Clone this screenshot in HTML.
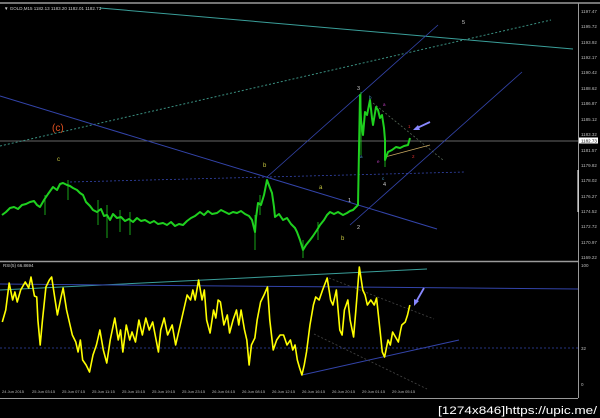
<!DOCTYPE html>
<html><head><meta charset="utf-8"><style>
html,body{margin:0;padding:0;background:#000;width:600px;height:418px;overflow:hidden}
svg{display:block}
text{font-family:"Liberation Sans",sans-serif}
</style></head><body>
<svg width="600" height="418" viewBox="0 0 600 418" xmlns="http://www.w3.org/2000/svg">
<rect width="600" height="418" fill="#000"/>
<line x1="0" y1="3" x2="600" y2="3" stroke="#9a9a9a" stroke-width="1.5"/>
<text x="4" y="10" font-size="4.5" fill="#ccc">▼ GOLD,M15  1182.13 1183.20 1182.01 1182.73</text>
<line x1="578.5" y1="3" x2="578.5" y2="398" stroke="#999" stroke-width="1"/>
<g font-size="4.5" fill="#bbb">
<text x="581" y="13">1197.47</text><text x="581" y="28">1195.72</text><text x="581" y="44">1193.92</text><text x="581" y="59">1192.17</text><text x="581" y="74">1190.42</text><text x="581" y="90">1188.62</text><text x="581" y="105">1186.87</text><text x="581" y="121">1185.12</text><text x="581" y="136">1183.32</text><text x="581" y="152">1181.57</text><text x="581" y="167">1179.82</text><text x="581" y="182">1178.02</text><text x="581" y="198">1176.27</text><text x="581" y="213">1174.52</text><text x="581" y="228">1172.72</text><text x="581" y="244">1170.97</text><text x="581" y="259">1169.22</text>
<text x="581" y="267">100</text><text x="581" y="350">32</text><text x="581" y="386">0</text>
</g>
<rect x="579" y="137.5" width="19" height="6" fill="#fff"/>
<text x="581" y="142.5" font-size="4.5" fill="#000">1182.73</text>
<line x1="578" y1="170" x2="578" y2="212" stroke="#fff" stroke-width="1"/>
<line x1="0" y1="141" x2="578" y2="141" stroke="#888" stroke-width="0.8"/>
<line x1="100" y1="8" x2="573" y2="49" stroke="#3a9f9a" stroke-width="1"/>
<line x1="0" y1="146" x2="551" y2="20" stroke="#3a8f80" stroke-width="1" stroke-dasharray="2,2"/>
<line x1="0" y1="96" x2="437" y2="229" stroke="#3344aa" stroke-width="1"/>
<line x1="267" y1="177" x2="438" y2="25" stroke="#3344aa" stroke-width="0.8"/>
<line x1="350" y1="225" x2="522" y2="72" stroke="#3344aa" stroke-width="0.8"/>
<line x1="70" y1="182" x2="465" y2="172" stroke="#3344aa" stroke-width="0.8" stroke-dasharray="2,2"/>
<line x1="373" y1="103" x2="443" y2="160" stroke="#556655" stroke-width="0.8" stroke-dasharray="2,2"/>
<line x1="385" y1="157" x2="430" y2="145" stroke="#c8a860" stroke-width="0.8"/>
<line x1="430" y1="122" x2="415" y2="129" stroke="#8888ff" stroke-width="1.8"/>
<polygon points="413,130 418,125 420,130" fill="#8888ff"/>
<polyline fill="none" stroke="#1fd01f" stroke-width="2" stroke-linejoin="round" points="2,215 6,212 10,208 14,207 18,209 22,205 26,204 30,202 34,201 37,205 40,207 44,200 48,194 53,187 57,190 60,184 63,183 67,185 70,186 73,188 77,190 80,193 83,195 86,202 90,206 93,210 97,212 101,209 104,216 107,215 110,220 113,214 117,218 121,217 125,221 129,219 133,222 137,218 141,221 145,220 150,223 154,221 158,224 163,223 167,225 171,222 175,226 179,224 183,225 187,221 191,218 195,216 200,212 204,215 208,211 212,214 217,213 221,210 225,212 229,214 233,212 237,213 241,211 245,214 249,216 252,220 255,232 256,218 258,203 261,205 264,195 267,180 270,188 272,193 274,207 275,217 279,214 283,220 287,218 291,224 295,228 297,232 300,240 303,250 306,245 310,240 313,236 317,230 320,225 324,220 327,215 330,212 334,214 338,212 343,215 347,213 350,211 353,210 356,207 358,205 360,95 361,120 363,135 365,112 367,115 370,100 372,118 373,125 376,107 378,110 380,118 382,115 384,128 385,140 385,160 388,152 392,150 396,147 400,148 404,146 408,145 410,138"/>
<g stroke="#1fd01f" stroke-width="0.8">
<line x1="107" y1="205" x2="107" y2="238"/><line x1="130" y1="212" x2="130" y2="235"/><line x1="98" y1="200" x2="98" y2="225"/><line x1="255" y1="215" x2="255" y2="250"/><line x1="303" y1="240" x2="303" y2="258"/><line x1="361" y1="92" x2="361" y2="155"/><line x1="385" y1="150" x2="385" y2="167"/><line x1="45" y1="195" x2="45" y2="215"/><line x1="68" y1="180" x2="68" y2="200"/><line x1="260" y1="195" x2="260" y2="215"/><line x1="318" y1="222" x2="318" y2="240"/><line x1="120" y1="210" x2="120" y2="232"/></g>
<text x="52" y="131" font-size="10" fill="#e05020">(c)</text>
<g font-size="6" fill="#c8c840"><text x="57" y="161">c</text><text x="263" y="167">b</text><text x="319" y="189">a</text><text x="341" y="240">b</text></g>
<g font-size="5.5" fill="#ccc"><text x="357" y="90">3</text><text x="462" y="24">5</text><text x="348" y="202">1</text><text x="357" y="229">2</text><text x="383" y="186">4</text></g>
<g font-size="4.5"><text x="369" y="99" fill="#4aa0d0">b</text><text x="360" y="158" fill="#4aa0d0">a</text><text x="382" y="180" fill="#4aa0d0">c</text><text x="383" y="106" fill="#c040c0">a</text><text x="377" y="163" fill="#c040c0">e</text><text x="408" y="128" fill="#e03030">1</text><text x="412" y="158" fill="#e03030">2</text></g>
<line x1="0" y1="261.5" x2="578" y2="261.5" stroke="#9a9a9a" stroke-width="1.5"/>
<text x="3" y="267" font-size="4.5" fill="#ccc">RSI(5) 66.8694</text>
<line x1="0" y1="290" x2="427" y2="269" stroke="#3a9f9a" stroke-width="1"/>
<line x1="0" y1="284" x2="578" y2="289" stroke="#3344aa" stroke-width="1"/>
<line x1="0" y1="348" x2="578" y2="348" stroke="#3344aa" stroke-width="0.8" stroke-dasharray="2,2"/>
<line x1="302" y1="375" x2="459" y2="340" stroke="#3344aa" stroke-width="1"/>
<line x1="329" y1="278" x2="434" y2="319" stroke="#444" stroke-width="0.8" stroke-dasharray="2,2"/>
<line x1="314" y1="334" x2="427" y2="389" stroke="#444" stroke-width="0.8" stroke-dasharray="2,2"/>
<line x1="424" y1="288" x2="416" y2="302" stroke="#8888ff" stroke-width="1.8"/>
<polygon points="414,306 414,299 419,301" fill="#8888ff"/>
<g transform="matrix(1.148 0 0 1 0 0)">
<polyline fill="none" stroke="#ffff00" stroke-width="1.6" vector-effect="non-scaling-stroke" stroke-linejoin="round" points="2,322 5,310 8,283 11,300 13,292 15,302 18,290 22,282 25,288 27,277 30,296 32,297 33,320 35,345 37,320 40,287 43,280 45,277 48,300 50,315 53,298 55,288 58,310 61,325 63,335 66,342 68,352 70,340 72,360 75,365 78,372 81,355 84,345 87,330 90,350 93,363 96,340 100,318 103,340 105,330 107,352 110,325 113,340 115,332 118,342 121,320 124,335 127,318 130,330 133,322 136,340 138,352 140,330 143,318 146,335 150,325 153,345 156,330 160,310 163,295 166,300 168,290 170,300 173,280 176,300 178,290 180,320 183,333 186,310 188,318 190,300 192,302 195,325 198,315 200,333 203,320 206,310 208,325 210,310 213,330 215,340 217,365 219,345 222,338 224,320 227,302 230,295 233,287 235,320 238,350 241,340 244,335 247,335 250,345 253,340 255,350 257,345 259,360 261,368 263,375 265,365 267,352 270,325 273,305 275,297 278,300 281,290 285,278 288,300 290,305 293,290 296,330 298,335 300,310 303,300 305,320 308,337 310,310 313,267 316,290 318,295 320,305 323,300 326,305 328,298 331,330 333,352 335,357 338,340 340,345 342,332 345,338 347,342 349,330 350,325 353,322 355,315 357,305"/>
</g>
<line x1="0" y1="398.5" x2="578" y2="398.5" stroke="#999" stroke-width="1"/>
<g font-size="4" fill="#bbb">
<text x="2" y="393">24 Jun 2015</text><text x="32" y="393">25 Jun 03:15</text><text x="62" y="393">25 Jun 07:15</text><text x="92" y="393">25 Jun 11:15</text><text x="122" y="393">25 Jun 15:15</text><text x="152" y="393">25 Jun 19:15</text><text x="182" y="393">25 Jun 23:15</text><text x="212" y="393">26 Jun 04:15</text><text x="242" y="393">26 Jun 08:15</text><text x="272" y="393">26 Jun 12:15</text><text x="302" y="393">26 Jun 16:15</text><text x="332" y="393">26 Jun 20:15</text><text x="362" y="393">29 Jun 01:15</text><text x="392" y="393">29 Jun 05:15</text>
</g>
<text x="438" y="414" font-size="11" fill="#fff" font-family="Liberation Mono,monospace" textLength="159" lengthAdjust="spacingAndGlyphs">[1274x846]https://upic.me/</text>
</svg>
</body></html>
